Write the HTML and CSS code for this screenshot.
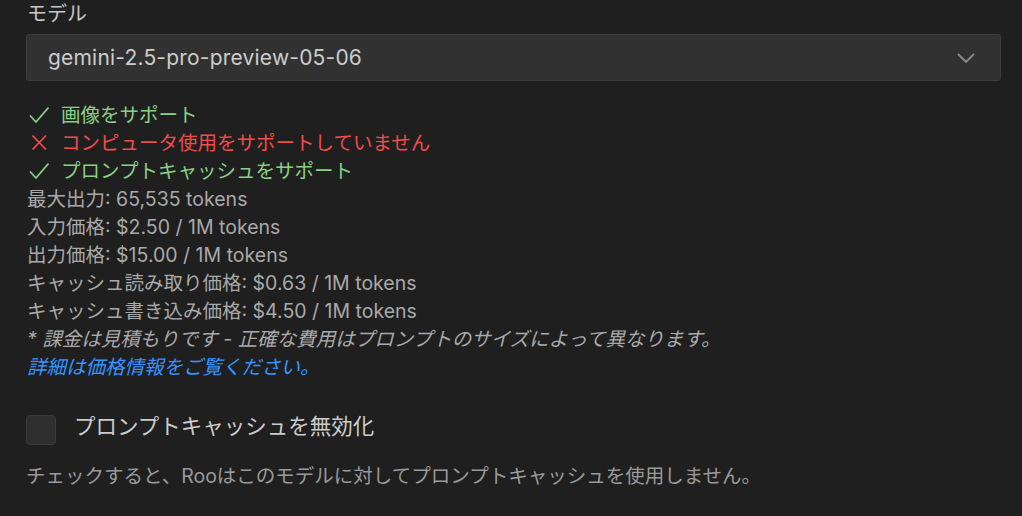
FILE: index.html
```html
<!DOCTYPE html>
<html lang="ja">
<head>
<meta charset="utf-8">
<link rel="stylesheet" href="styles.css">
</head>
<body>
<div class="panel">
  <div class="label">モデル</div>
  <div class="select">
    <span class="select-value">gemini-2.5-pro-preview-05-06</span>
    <svg class="chevron" width="18" height="10" viewBox="0 0 18 10"><path d="M1 1 L9 9 L17 1" fill="none" stroke="#8a8a8a" stroke-width="1.8"/></svg>
  </div>
  <div class="info">
    <div class="row ok"><svg class="ico" width="22" height="18" viewBox="0 0 22 18"><path d="M2 9.5 L8 16 L20.5 1.5" fill="none" stroke="currentColor" stroke-width="1.8"/></svg><span>画像をサポート</span></div>
    <div class="row bad"><svg class="ico" width="22" height="18" viewBox="0 0 22 18"><path d="M4.5 1.5 L18 15.5 M18 1.5 L4.5 15.5" fill="none" stroke="currentColor" stroke-width="1.8"/></svg><span>コンピュータ使用をサポートしていません</span></div>
    <div class="row ok"><svg class="ico" width="22" height="18" viewBox="0 0 22 18"><path d="M2 9.5 L8 16 L20.5 1.5" fill="none" stroke="currentColor" stroke-width="1.8"/></svg><span>プロンプトキャッシュをサポート</span></div>
    <div class="row">最大出力: 65,535 tokens</div>
    <div class="row">入力価格: $2.50 / 1M tokens</div>
    <div class="row">出力価格: $15.00 / 1M tokens</div>
    <div class="row">キャッシュ読み取り価格: $0.63 / 1M tokens</div>
    <div class="row">キャッシュ書き込み価格: $4.50 / 1M tokens</div>
    <div class="row note">* 課金は見積もりです - 正確な費用はプロンプトのサイズによって異なります。</div>
    <div class="row note link">詳細は価格情報をご覧ください。</div>
  </div>
  <label class="check">
    <span class="box"></span>
    <span class="check-text">プロンプトキャッシュを無効化</span>
  </label>
  <div class="desc">チェックすると、Rooはこのモデルに対してプロンプトキャッシュを使用しません。</div>
</div>
</body>
</html>
```

FILE: styles.css
```css
html, body {
  margin: 0;
  padding: 0;
  background: #1f1f1f;
}
body {
  font-family: Inter, "Noto Sans CJK JP", sans-serif;
  color: #a8a8a8;
  width: 1022px;
  height: 516px;
  overflow: hidden;
}
.panel {
  padding: 0 21px 0 26px;
}
.label {
  font-size: 20px;
  line-height: 28px;
  color: #c8c8c8;
  margin-top: 0;
  padding-left: 1px;
}
.select {
  margin-top: 6px;
  height: 47px;
  box-sizing: border-box;
  background: #313131;
  border: 1px solid #3c3c3c;
  border-radius: 3px;
  display: flex;
  align-items: center;
  justify-content: space-between;
  padding: 0 25px 0 21px;
}
.select-value {
  font-size: 21px;
  color: #cccccc;
  letter-spacing: 0.2px;
}
.chevron {
  display: block;
}
.info {
  margin-top: 20px;
  font-size: 19.5px;
  line-height: 28px;
  color: #a9a9a9;
}
.row {
  display: flex;
  align-items: center;
  height: 28px;
  padding-left: 1px;
  white-space: nowrap;
}
.ico {
  margin-left: 1px;
  margin-right: 11px;
  flex: none;
}
.ok {
  color: #89d185;
}
.bad {
  color: #f14c4c;
}
.note {
  font-style: italic;
}
.link {
  color: #3794ff;
}
.check {
  display: flex;
  align-items: center;
  margin-top: 33px;
}
.box {
  width: 30px;
  height: 30px;
  box-sizing: border-box;
  background: #2f2f2f;
  border: 1px solid #3b3b3b;
  border-radius: 4px;
  flex: none;
}
.check-text {
  margin-left: 18px;
  font-size: 21.5px;
  color: #cccccc;
  position: relative;
  top: -5px;
}
.desc {
  margin-top: 17px;
  font-size: 19.5px;
  line-height: 28px;
  color: #9a9a9a;
}
```
